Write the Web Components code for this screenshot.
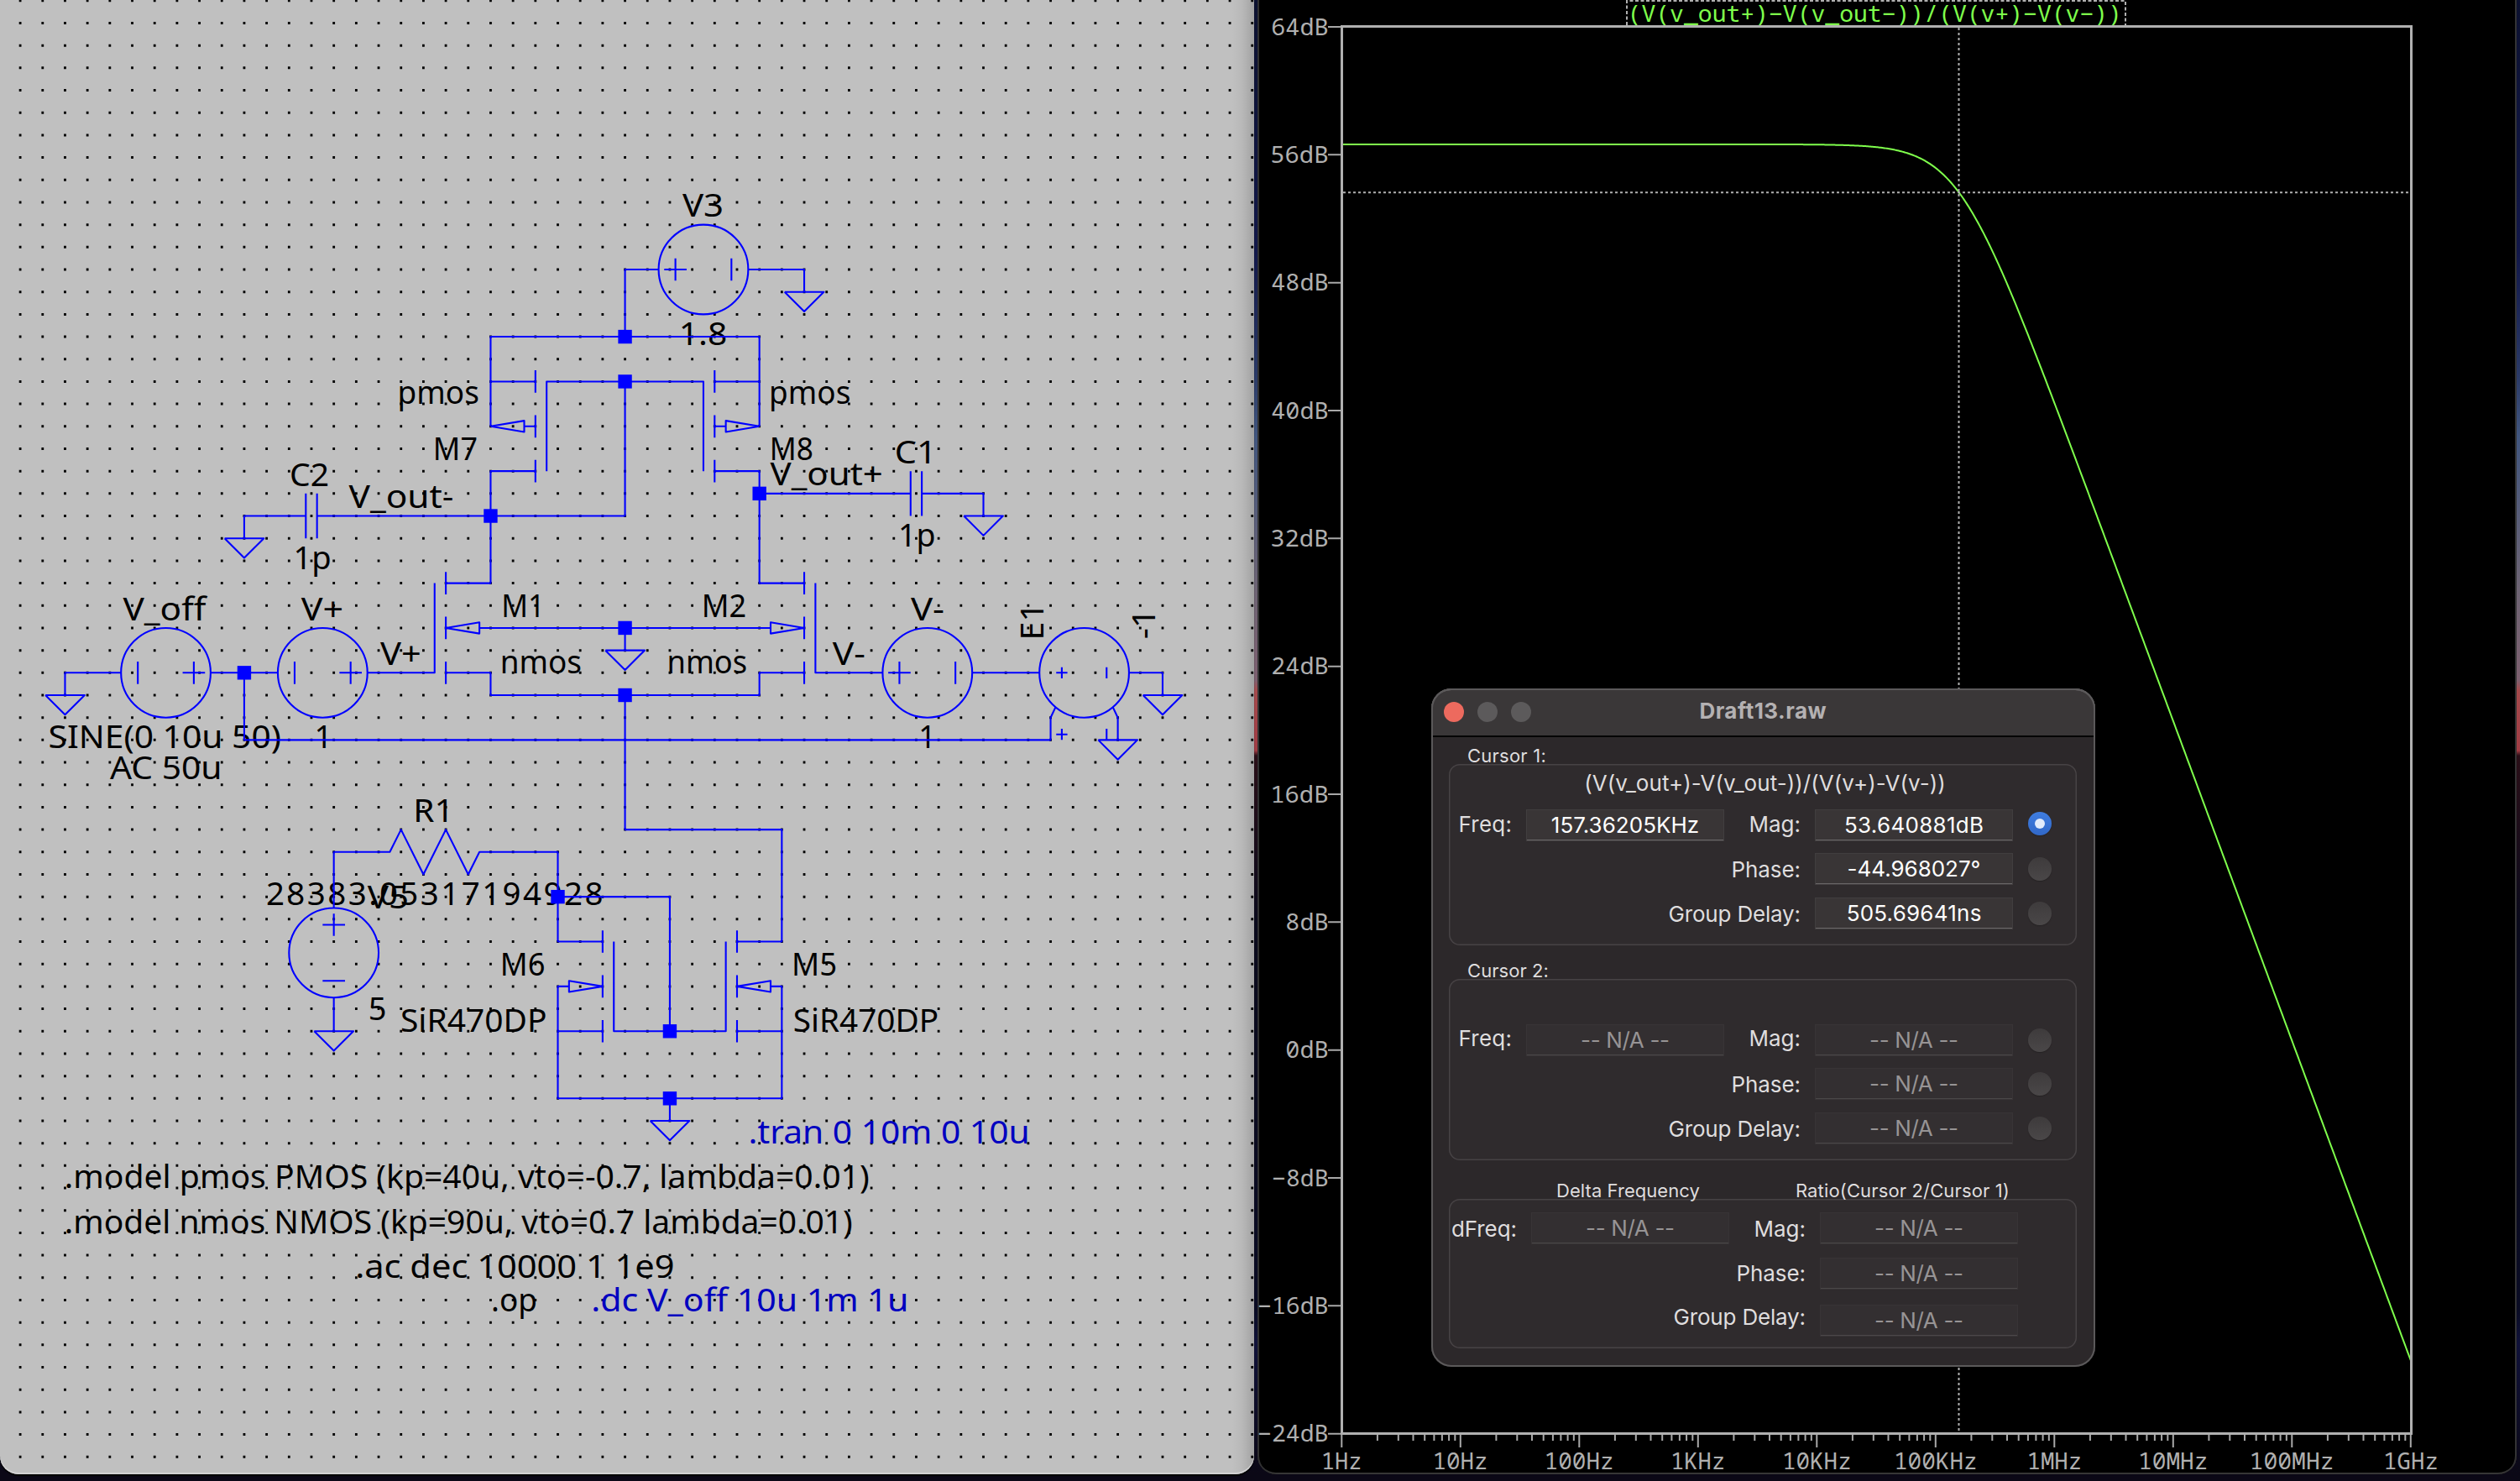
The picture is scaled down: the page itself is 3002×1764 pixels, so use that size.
<!DOCTYPE html>
<html lang="en">
<head>
<meta charset="utf-8">
<title>LTspice</title>
<style>
html,body{margin:0;padding:0;background:#0b0816}
body{width:3002px;height:1764px;overflow:hidden;font-family:Inter,"Liberation Sans",sans-serif}
</style>
</head>
<body>
<spice-desktop>
  <schematic-pane></schematic-pane>
  <plot-pane></plot-pane>
  <cursor-window heading="Draft13.raw">
    <group-box cap="32" bottom="216">
      <fit-text slot="caption" w="91.5" style="margin-left:22px">Cursor 1:</fit-text>
      <fit-text slot="title" w="426">(V(v_out+)-V(v_out-))/(V(v+)-V(v-))</fit-text>
      <meter-row mt="0" dy="-1" l1="Freq:" w1="60" v1="157.36205KHz" vw1="174" l2="Mag:" w2="58" v2="53.640881dB" vw2="163" radio="on" rdy="-2"></meter-row>
      <meter-row mt="14" dy="1" l2="Phase:" w2="79" v2="-44.968027°" vw2="157" radio="off"></meter-row>
      <meter-row mt="15" dy="1" l2="Group Delay:" w2="155" v2="505.69641ns" vw2="158" radio="off"></meter-row>
    </group-box>
    <group-box cap="40" bottom="216">
      <fit-text slot="caption" w="94.5" style="margin-left:22px">Cursor 2:</fit-text>
      <meter-row mt="0" dy="-2" l1="Freq:" w1="60" l2="Mag:" w2="58" radio="off"></meter-row>
      <meter-row mt="14" dy="1" l2="Phase:" w2="79" radio="off"></meter-row>
      <meter-row mt="15" dy="1" l2="Group Delay:" w2="155" radio="off"></meter-row>
    </group-box>
    <group-box cap="46" bottom="178" start="16" shift="6">
      <fit-text slot="caption" w="169.5" style="margin-left:128px">Delta Frequency</fit-text>
      <fit-text slot="caption" w="252" style="margin-left:114px">Ratio(Cursor 2/Cursor 1)</fit-text>
      <meter-row mt="0" dy="1" l1="dFreq:" w1="75.5" l2="Mag:" w2="58"></meter-row>
      <meter-row mt="16" dy="0" l2="Phase:" w2="79"></meter-row>
      <meter-row mt="18" dy="-4" l2="Group Delay:" w2="155"></meter-row>
    </group-box>
  </cursor-window>
</spice-desktop>
<script>
const ctx = document.createElement('canvas').getContext('2d');
const ink = (font, s) => {
  ctx.font = font;
  const m = ctx.measureText(s);
  return { l: -m.actualBoundingBoxLeft, r: m.actualBoundingBoxRight };
};
const esc = s => s.replace(/&/g, '&amp;').replace(/</g, '&lt;');

/* Text whose visible glyphs span exactly x0..x1 on baseline y. */
const spanText = (s, x0, x1, y, size, family, fill, rot) => {
  const m = ink(`${size}px ${family}`, s);
  const k = (x1 - x0) / (m.r - m.l);
  const tf = rot
    ? `matrix(0 ${-k} 1 0 ${y} ${x1 + m.l * k})`
    : `matrix(${k} 0 0 1 ${x0 - m.l * k} ${y})`;
  return `<text transform="${tf}" font-size="${size}" fill="${fill}" style='font-family:${family}'>${esc(s)}</text>`;
};

/* The same, reached by tracking instead of stretching. */
const trackText = (s, x0, x1, y, size, family, fill) => {
  const m = ink(`${size}px ${family}`, s);
  const ls = (x1 - x0 - (m.r - m.l)) / (s.length - 1);
  return `<text x="${x0 - m.l}" y="${y}" font-size="${size}" fill="${fill}" style='font-family:${family};letter-spacing:${ls}px'>${esc(s)}</text>`;
};

class SpiceDesktop extends HTMLElement {
  constructor() {
    super();
    this.attachShadow({ mode: 'open' }).innerHTML = `<style>
      :host{display:flex;gap:4px;width:3002px;height:1764px;position:relative;overflow:hidden;align-items:flex-start;
        background:linear-gradient(180deg,#0c1130 0,#12184a 300px,#2b3b68 450px,#41567f 520px,#6d6474 700px,#7d6070 810px,#a54a4c 822px,#a03c44 894px,#2a0f18 900px,#0a0a1c 1100px,#0a0c24 1560px,#10123a 1600px,#0b0816 1754px)}
    </style><slot></slot>`;
  }
}

class SchematicPane extends HTMLElement {
  constructor() {
    super();
    const P = 26.684, X = i => +(24.1 + P * i).toFixed(2), Y = j => +(0.8 + P * j).toFixed(2);
    let dots = '';
    for (let j = 0; j <= 65; j++) for (let i = 0; i <= 55; i++)
      dots += `M${(X(i) - 1.4).toFixed(2)} ${(Y(j) - 1.5).toFixed(2)}h2.8v3h-2.8z`;
    let d = '', shapes = '';
    const line = (...p) => { for (let i = 0; i < p.length; i += 2) d += (i ? 'L' : 'M') + X(p[i]) + ' ' + Y(p[i + 1]); };
    const gnd = (i, j) => { line(i - .875, j, i + .875, j, i, j + .875); d += 'L' + X(i - .875) + ' ' + Y(j); };
    const src = (i, j) => { shapes += `<circle cx="${X(i)}" cy="${Y(j)}" r="${2 * P}"/>`; };
    const plus = (i, j, r = .5) => { line(i - r, j, i + r, j); line(i, j - r, i, j + r); };
    const minusV = (i, j, r = .5) => line(i, j - r, i, j + r);
    const bars = (i, j) => { for (const k of [0, 2, 4]) line(i, j + k - .5, i, j + k + .5); };
    const arrow = (tip, base, j) => { line(tip, j, base, j - .25, base, j + .25, tip, j); };

    /* supply V3 */
    src(30.5, 12); plus(29.25, 12); minusV(31.75, 12);
    line(28.5, 12, 27, 12, 27, 15); line(32.5, 12, 35, 12, 35, 13); gnd(35, 13);
    /* pmos mirror */
    line(21, 19, 21, 15, 33, 15, 33, 19);
    bars(23, 17); line(21, 17, 23, 17); arrow(21, 22.5, 19); line(22.5, 19, 23, 19); line(23.5, 21, 23.5, 17, 30.5, 17, 30.5, 21);
    bars(31, 17); line(31, 17, 33, 17); arrow(33, 31.5, 19); line(31, 19, 31.5, 19);
    line(23, 21, 21, 21, 21, 26, 19, 26); line(31, 21, 33, 21, 33, 26, 35, 26);
    line(27, 17, 27, 23, 13.25, 23);
    /* load capacitors */
    line(13.25, 22, 13.25, 24); line(12.75, 22, 12.75, 24); line(12.75, 23, 10, 23, 10, 24); gnd(10, 24);
    line(33, 22, 39.75, 22); line(39.75, 21, 39.75, 23); line(40.25, 21, 40.25, 23); line(40.25, 22, 43, 22, 43, 23); gnd(43, 23);
    /* differential pair */
    bars(19, 26); bars(35, 26); line(18.5, 26, 18.5, 30, 15.5, 30); line(35.5, 26, 35.5, 30, 38.5, 30);
    arrow(19, 20.5, 28); arrow(35, 33.5, 28); line(20.5, 28, 33.5, 28);
    line(27, 28, 27, 29); gnd(27, 29);
    line(19, 30, 21, 30, 21, 31, 33, 31, 33, 30, 35, 30);
    /* inputs */
    src(6.5, 30); minusV(5.25, 30); plus(7.75, 30); line(4.5, 30, 2, 30, 2, 31); gnd(2, 31); line(8.5, 30, 11.5, 30);
    src(13.5, 30); minusV(12.25, 30); plus(14.75, 30);
    line(10, 30, 10, 33, 46, 33, 46, 32, 46.22, 31.54);
    src(40.5, 30); plus(39.25, 30); minusV(41.75, 30); line(42.5, 30, 45.5, 30);
    src(47.5, 30); plus(46.5, 30, .25); minusV(48.5, 30, .25); line(49.5, 30, 51, 30, 51, 31); gnd(51, 31);
    line(48.78, 31.54, 49, 32, 49, 33); gnd(49, 33); plus(46.5, 32.75, .25); minusV(48.5, 32.75, .25);
    /* tail mirror */
    line(27, 31, 27, 37, 34, 37, 34, 42, 32, 42);
    line(14, 40.5, 14, 38, 16.5, 38, 17, 37, 18, 39, 19, 37, 20, 39, 20.5, 38, 24, 38, 24, 42, 26, 42);
    line(24, 40, 29, 40, 29, 46);
    bars(26, 42); bars(32, 42); line(26.5, 42, 26.5, 46, 31.5, 46, 31.5, 42);
    arrow(26, 24.5, 44); arrow(32, 33.5, 44);
    line(24.5, 44, 24, 44, 24, 49, 34, 49, 34, 44, 33.5, 44); line(24, 46, 26, 46); line(32, 46, 34, 46);
    line(29, 49, 29, 50); gnd(29, 50);
    src(14, 42.5); plus(14, 41.25); line(13.5, 43.75, 14.5, 43.75); line(14, 44.5, 14, 46); gnd(14, 46);

    const nodes = [[27, 15], [27, 17], [21, 23], [33, 22], [27, 28], [27, 31], [10, 30], [24, 40], [29, 46], [29, 49]]
      .map(([i, j]) => `<rect x="${X(i) - 8.2}" y="${Y(j) - 8.2}" width="16.4" height="16.4"/>`).join('');

    const F = '"Noto Sans","Open Sans",sans-serif', K = '#000', B = '#0000c0';
    const T = [
      ['V_off', 146.4, 248.2, 738.7], ['V+', 358.7, 408.1, 738.7], ['V+', 453, 500.7, 792], ['M1', 600, 641.8, 735],
      ['nmos', 598.6, 691.7, 802.3], ['1p', 352.4, 393, 678], ['SINE(0 10u 50)', 58.6, 334.5, 891], ['AC 50u', 130.9, 261.7, 928],
      ['1', 377.4, 388.1, 890.7], ['R1', 495.4, 532.2, 978.7], ['V3', 812.9, 859.9, 257.7], ['1.8', 811.9, 865.2, 411],
      ['pmos', 476.5, 569.5, 480.7], ['pmos', 919, 1012, 480.7], ['M7', 518.6, 568, 548], ['M8', 919.5, 968, 548],
      ['V_out+', 917.5, 1050.8, 578], ['C1', 1067.8, 1107, 552], ['1p', 1073, 1112.9, 651], ['V_out-', 415.5, 539, 604.7],
      ['C2', 347, 391, 578.7], ['M2', 838.6, 888.3, 735], ['nmos', 797.3, 888.8, 802.3], ['V-', 1084.9, 1123.6, 738.7],
      ['V-', 991.8, 1029.5, 792], ['1', 1097, 1107.3, 890.7],
      ['V5', 437.8, 484.9, 1082.3], ['5', 440.7, 458.5, 1215], ['M6', 598.6, 648.5, 1162], ['M5', 945.8, 995.2, 1162],
      ['SiR470DP', 478, 650.2, 1229], ['SiR470DP', 945.8, 1116.9, 1229], ['.tran 0 10m 0 10u', 893.7, 1223.7, 1362, B],
      ['.model pmos PMOS (kp=40u, vto=-0.7, lambda=0.01)', 78.8, 1035.5, 1415.3],
      ['.model nmos NMOS (kp=90u, vto=0.7 lambda=0.01)', 78.8, 1015.6, 1469],
      ['.ac dec 10000 1 1e9', 425.3, 802.5, 1522], ['.op', 587, 638.4, 1562], ['.dc V_off 10u 1m 1u', 706.4, 1079.4, 1562, B]
    ].map(t => spanText(t[0], t[1], t[2], t[3], 38.5, F, t[4] || K)).join('')
      + trackText('28383.05317194928', 317.9, 717.4, 1078, 38.5, F, K)
      + spanText('E1', 726, 759.3, 1242.9, 38.5, F, K, true)
      + spanText('-1', 733.3, 760.3, 1376.2, 38.5, F, K, true);

    this.attachShadow({ mode: 'open' }).innerHTML = `<style>
      :host{display:block;flex:0 0 1494px;height:1756px;border-radius:0 0 22px 22px;overflow:hidden;
        background:linear-gradient(90deg,#c0c0c0 1468px,#b8b8b8 1480px,#a2a2a2 1494px);box-shadow:inset 0 -2px 0 #d2d2d2,0 2px 1px #000}
      svg{display:block}
    </style><svg width="1494" height="1756" viewBox="0 0 1494 1756">
      <path d="${dots}" fill="#000"/>${T}
      <g fill="none" stroke="#00f" stroke-width="2.1" stroke-linejoin="round">${shapes}<path d="${d}"/></g>
      <g fill="#00f">${nodes}</g></svg>`;
  }
}

class PlotPane extends HTMLElement {
  constructor() {
    super();
    const F = '"Noto Sans Mono","DejaVu Sans Mono","Liberation Mono",monospace';
    const G = '#b0b0b0', x0 = 1598.3, dec = 141.5, y0 = 32, step = 152.33;
    let s = '', ticks = '';
    const dbs = ['64', '56', '48', '40', '32', '24', '16', '8', '0', '−8', '−16', '−24'];
    dbs.forEach((v, n) => {
      const y = y0 + n * step, t = v + 'dB';
      ticks += `M1582 ${y}H1597`;
      const left = 1581.3 - 17.05 * t.length + 2.2 + (t[0] === '−' ? 0.8 : 0);
      s += spanText(t, left, 1581.3, y + 9.7, 27, F, G);
    });
    const hz = [['1Hz', 1575.7, 1620.4], ['10Hz', 1708.5, 1770.4], ['100Hz', 1841.6, 1920.4], ['1KHz', 1992, 2053], ['10KHz', 2125, 2203.5],
      ['100KHz', 2258, 2353.5], ['1MHz', 2416.5, 2478], ['10MHz', 2549, 2628.3], ['100MHz', 2681.7, 2778.3], ['1GHz', 2841, 2902.7]];
    hz.forEach(([t, a, b], n) => {
      const x = x0 + n * dec;
      ticks += `M${x} 1709V1724`;
      if (n < 9) for (let k = 2; k < 10; k++) ticks += `M${(x + dec * Math.log10(k)).toFixed(2)} 1709V1716`;
      s += spanText(t, a, b, 1750, 27, F, G);
    });
    let c = '';
    const gain = 53.640881 + 10 * Math.log10(2), fc = 157362.05;
    for (let i = 0; i <= 900; i++) {
      const f = 10 ** (i / 100);
      const db = gain - 10 * Math.log10(1 + (f / fc) ** 2);
      c += (i ? 'L' : 'M') + (x0 + dec * i / 100).toFixed(2) + ' ' + (y0 + (64 - db) / 8 * step).toFixed(2);
    }
    s += spanText('(V(v_out+)−V(v_out−))/(V(v+)−V(v−))', 1943.8, 2522.8, 26, 27, F, '#7fff4c');
    this.attachShadow({ mode: 'open' }).innerHTML = `<style>
      :host{display:block;flex:0 0 1500px;height:1756px;background:#000;border-radius:0 0 22px 22px;box-shadow:inset -2px 0 0 #333,inset 2px 0 0 #303030,inset 0 -2px 0 #363636}
      svg{display:block;overflow:visible}
    </style><svg width="1500" height="1756" viewBox="1498 0 1500 1756">
      <path d="M1938 30V1H2532V30" fill="none" stroke="#b0b0b0" stroke-width="2" stroke-dasharray="4 2.5"/>
      <path d="${c}" fill="none" stroke="#7fff4c" stroke-width="2"/>
      <path d="M2333.5 33V1706M1600 229.3H2871" fill="none" stroke="#b0b0b0" stroke-width="2" stroke-dasharray="3 3"/>
      <path d="${ticks}" fill="none" stroke="#a8a8a8" stroke-width="2"/>
      <rect x="1598.5" y="31.5" width="1274" height="1676" fill="none" stroke="#b0b0b0" stroke-width="3"/>${s}</svg>`;
  }
}

/* Inline text tracked so that its ink is w pixels wide. */
class FitText extends HTMLElement {
  connectedCallback() {
    if (this.shadowRoot) return;
    const s = this.textContent;
    this.attachShadow({ mode: 'open' }).innerHTML = `<style>:host{display:block;white-space:nowrap}span{display:block;font-kerning:normal}</style><span><slot></slot></span>`;
    const cs = getComputedStyle(this);
    const m = ink(`${cs.fontWeight} ${cs.fontSize} Inter`, s);
    const ls = (+this.getAttribute('w') - (m.r - m.l)) / (s.length - 1);
    const span = this.shadowRoot.querySelector('span');
    span.style.letterSpacing = ls + 'px';
    span.style.marginRight = -ls + 'px';
  }
}

class CursorWindow extends HTMLElement {
  constructor() {
    super();
    this.attachShadow({ mode: 'open' }).innerHTML = `<style>
      :host{position:absolute;left:1704.5px;top:820px;width:791px;height:808px;box-sizing:border-box;border-radius:24px;
        background:#2c282a;color:#dfddde;font:26px/38px Inter,"Liberation Sans",sans-serif;display:flex;flex-direction:column}
      :host::after{content:"";position:absolute;inset:0;border-radius:24px;box-shadow:inset 0 0 0 2px #5b595a,inset 0 2px 0 #767475;pointer-events:none}
      header{flex:0 0 56px;background:#3a3738;border-bottom:2px solid #050505;border-radius:24px 24px 0 0;display:grid;grid-template-columns:120px 1fr 120px;align-items:center;padding:0 15px}
      .dots{display:flex;gap:16px}
      .dots i{width:24px;height:24px;border-radius:50%;background:#5c5a5b}
      .dots i:first-child{background:#ed6a5e}
      fit-text{justify-self:center;font-weight:700;color:#b4b1b2;position:relative;top:-1px}
      main{padding:0 21.5px;display:flex;flex-direction:column}
    </style><header><div class="dots"><i></i><i></i><i></i></div><fit-text w="150">${this.getAttribute('heading')}</fit-text><span></span></header>
    <main><slot></slot></main>`;
  }
}

class GroupBox extends HTMLElement {
  constructor() {
    super();
    const a = (n, v) => +(this.getAttribute(n) ?? v);
    const cap = a('cap');
    this.attachShadow({ mode: 'open' }).innerHTML = `<style>
      :host{display:block}
      .cap{height:${cap}px;box-sizing:border-box;padding-top:${cap - 23}px;display:flex;font-size:22px;line-height:26px;position:relative;z-index:1}
      .box{height:${a('bottom')}px;box-sizing:border-box;border-radius:13px;background:#2f2b2d;box-shadow:inset 0 0 0 1.5px #474345;display:flex;flex-direction:column}
      .title{height:${a('start', 54)}px;box-sizing:border-box;padding-top:${a('start', 54) > 20 ? 4 : 0}px;padding-left:5px;display:flex;justify-content:center;flex:none}
      .rows{padding-left:${a('shift', 0)}px}
    </style><div class="cap"><slot name="caption"></slot></div>
    <div class="box"><div class="title"><slot name="title"></slot></div><div class="rows"><slot></slot></div></div>`;
  }
}

class MeterRow extends HTMLElement {
  constructor() {
    super();
    const g = n => this.getAttribute(n);
    const field = (v, w) => `<div class="f ${v ? '' : 'na'}"><fit-text w="${v ? w : 104}">${v || '-- N/A --'}</fit-text></div>`;
    const label = (t, w) => `<div class="l">${t ? `<fit-text w="${w}">${t}</fit-text>` : ''}</div>`;
    this.attachShadow({ mode: 'open' }).innerHTML = `<style>
      :host{display:grid;grid-template-columns:73px 236px 70px 236px 28px;column-gap:19px;height:38px;margin-top:${g('mt')}px}
      .l{display:flex;justify-content:flex-end;min-width:0;margin-top:${g('dy')}px;height:38px;margin-right:-2px}
      .f{height:38px;display:flex;justify-content:center;background:#393536;color:#fff;box-shadow:inset 0 0 0 1px #413e3f,inset 0 -2px 0 #6a6768;line-height:37px}
      .f.na{background:#332f31;color:#979495;box-shadow:inset 0 0 0 1px #383436,inset 0 -2px 0 #4b4849}
      .r{width:28px;height:28px;border-radius:50%;margin:${5 + +(g('rdy') || 0)}px 0 0 -1px;background:linear-gradient(#3e3b3c,#4a4748);display:grid;place-items:center;box-shadow:0 1px 1px #252223}
      .r.on{background:linear-gradient(#3f7de0,#3168c8)}
      .r.on i{width:12px;height:12px;border-radius:50%;background:#e2ebfb}
    </style>${label(g('l1'), g('w1'))}${g('l1') ? field(g('v1'), g('vw1')) : '<span></span>'}${label(g('l2'), g('w2'))}${field(g('v2'), g('vw2'))}${g('radio') ? `<div class="r ${g('radio')}"><i></i></div>` : ''}`;
  }
}

customElements.define('spice-desktop', SpiceDesktop);
customElements.define('schematic-pane', SchematicPane);
customElements.define('plot-pane', PlotPane);
customElements.define('cursor-window', CursorWindow);
customElements.define('group-box', GroupBox);
customElements.define('meter-row', MeterRow);
/* Last, so that every font size it measures with is already inherited. */
customElements.define('fit-text', FitText);
</script>
</body>
</html>
